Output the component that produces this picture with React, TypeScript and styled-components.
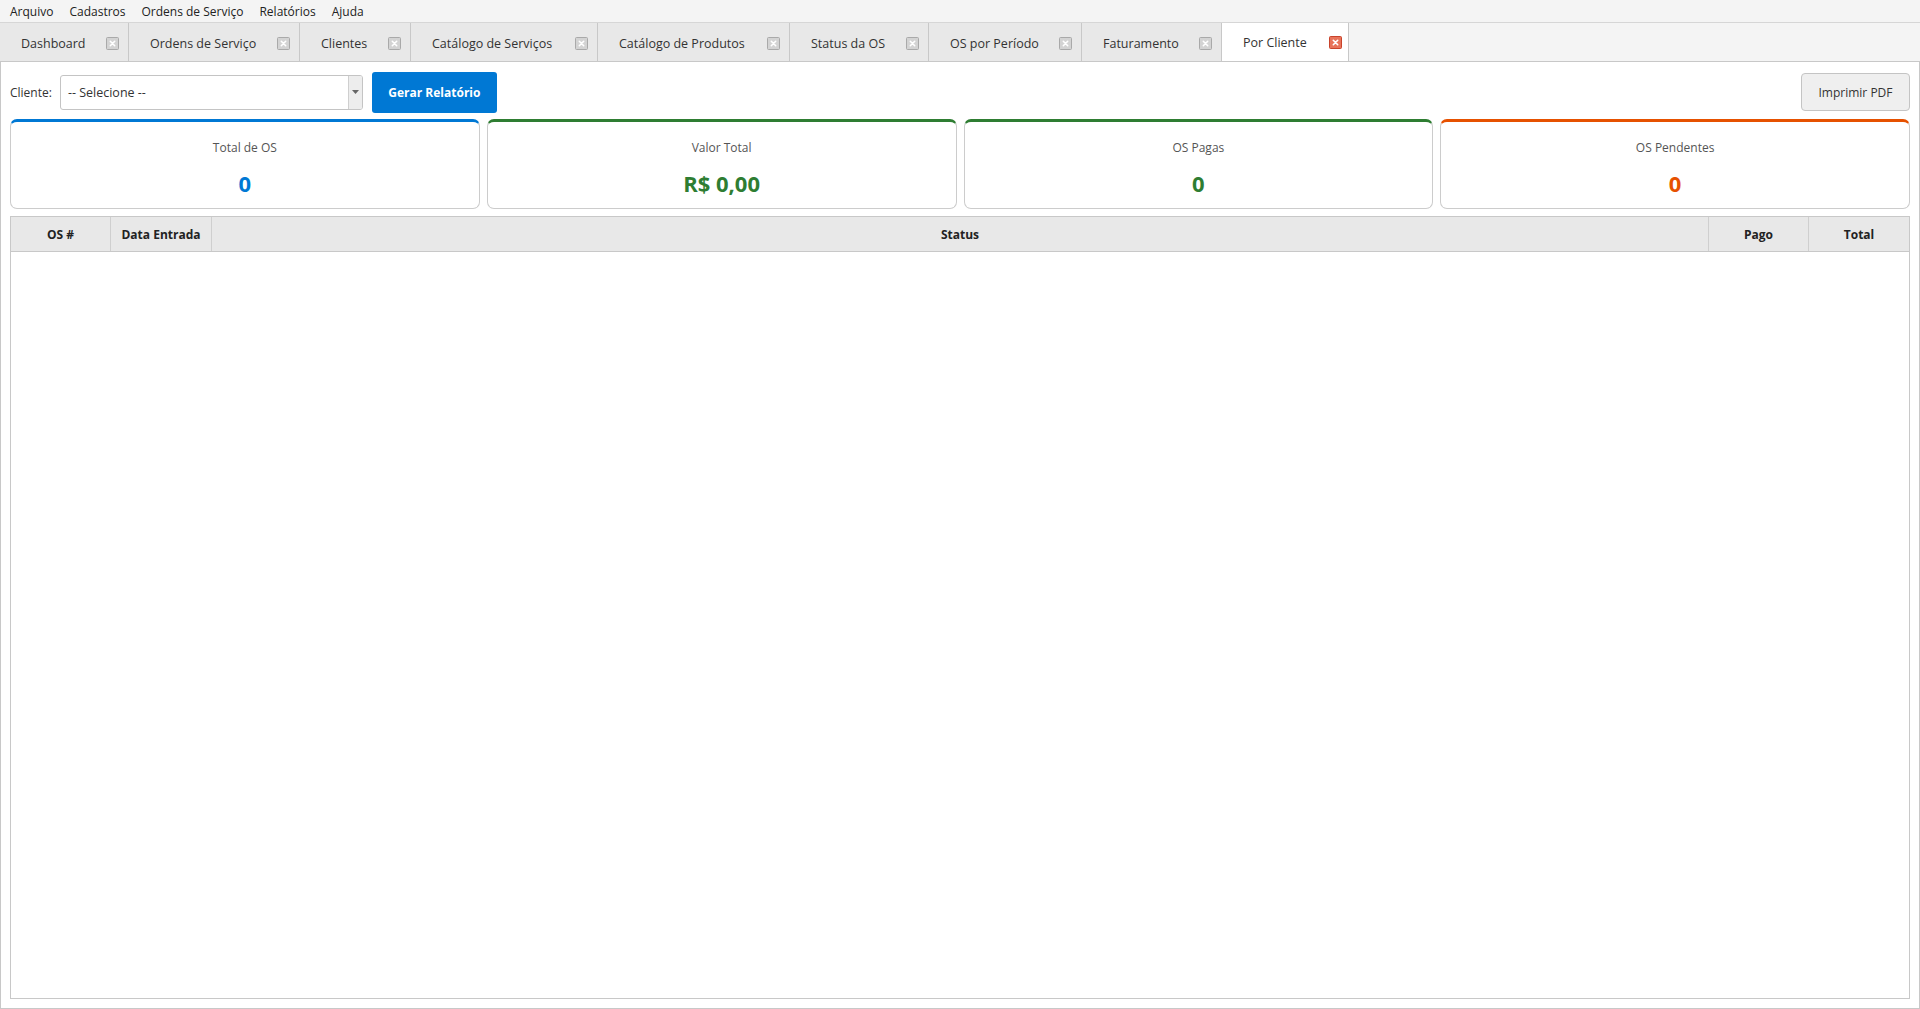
import React from 'react';
import styled, { createGlobalStyle } from 'styled-components';

const GlobalStyle = createGlobalStyle`
  html, body {
    margin: 0;
    padding: 0;
    height: 100%;
    background: #f4f4f4;
  }
  #root {
    height: 100%;
  }
  * {
    box-sizing: border-box;
  }
`;

type TabItem = { label: string; width: number; active?: boolean };

const tabs: TabItem[] = [
  { label: 'Dashboard', width: 129 },
  { label: 'Ordens de Serviço', width: 171 },
  { label: 'Clientes', width: 111 },
  { label: 'Catálogo de Serviços', width: 187 },
  { label: 'Catálogo de Produtos', width: 192 },
  { label: 'Status da OS', width: 139 },
  { label: 'OS por Período', width: 153 },
  { label: 'Faturamento', width: 140 },
  { label: 'Por Cliente', width: 127, active: true },
];

const menus = ['Arquivo', 'Cadastros', 'Ordens de Serviço', 'Relatórios', 'Ajuda'];

type Stat = { title: string; value: string; color: string };

const stats: Stat[] = [
  { title: 'Total de OS', value: '0', color: '#0078d4' },
  { title: 'Valor Total', value: 'R$ 0,00', color: '#2e7d32' },
  { title: 'OS Pagas', value: '0', color: '#2e7d32' },
  { title: 'OS Pendentes', value: '0', color: '#e65100' },
];

const columns = ['OS #', 'Data Entrada', 'Status', 'Pago', 'Total'];

const CloseIcon = ({ active }: { active?: boolean }) => (
  <svg width="13" height="13" viewBox="0 0 13 13">
    <rect
      x="0.5"
      y="0.5"
      width="12"
      height="12"
      rx="1"
      fill={active ? '#e8735a' : '#d3d3d3'}
      stroke={active ? '#c8432b' : '#a9a9a9'}
    />
    <path d="M4.3 4.3 L8.7 8.7 M8.7 4.3 L4.3 8.7" stroke="#fff" strokeWidth="1.6" strokeLinecap="round" />
  </svg>
);

export default function App() {
  return (
    <>
      <GlobalStyle />
      <Window>
        <MenuBar>
          {menus.map((m) => (
            <MenuItem key={m}>{m}</MenuItem>
          ))}
        </MenuBar>
        <TabBar>
          {tabs.map((t) => (
            <Tab key={t.label} $width={t.width} $active={t.active}>
              <TabLabel>{t.label}</TabLabel>
              <CloseIcon active={t.active} />
            </Tab>
          ))}
        </TabBar>
        <Content>
          <Toolbar>
            <Label>Cliente:</Label>
            <Combo>
              <ComboText>-- Selecione --</ComboText>
              <ComboArrow>
                <svg width="7" height="4" viewBox="0 0 7 4">
                  <path d="M0 0 L7 0 L3.5 4 Z" fill="#666" />
                </svg>
              </ComboArrow>
            </Combo>
            <PrimaryButton>Gerar Relatório</PrimaryButton>
            <Spacer />
            <SecondaryButton>Imprimir PDF</SecondaryButton>
          </Toolbar>
          <Cards>
            {stats.map((s) => (
              <Card key={s.title} $color={s.color}>
                <CardTitle>{s.title}</CardTitle>
                <CardValue $color={s.color}>{s.value}</CardValue>
              </Card>
            ))}
          </Cards>
          <Table>
            <HeaderRow>
              {columns.map((c) => (
                <HeaderCell key={c}>{c}</HeaderCell>
              ))}
            </HeaderRow>
            <TableBody />
          </Table>
        </Content>
      </Window>
    </>
  );
}

const Window = styled.div`
  height: 1009px;
  display: flex;
  flex-direction: column;
  font-family: 'Open Sans', 'Noto Sans', sans-serif;
  font-size: 12px;
  color: #333;
  background: #f4f4f4;
`;

const MenuBar = styled.div`
  height: 23px;
  display: flex;
  align-items: center;
  padding: 1px 0 0 2px;
  background: #f4f4f4;
  border-bottom: 1px solid #d6d6d6;
`;

const MenuItem = styled.div`
  padding: 0 8px;
  font-size: 12px;
  color: #222;
  line-height: 21px;
`;

const TabBar = styled.div`
  height: 39px;
  display: flex;
  background: #f4f4f4;
  border-bottom: 1px solid #c8c8c8;
`;

const Tab = styled.div<{ $width: number; $active?: boolean }>`
  width: ${(p) => p.$width}px;
  display: flex;
  align-items: center;
  justify-content: space-between;
  padding: ${(p) => (p.$active ? '0 6px 0 21px' : '2px 9px 0 21px')};
  background: ${(p) => (p.$active ? '#ffffff' : '#e8e8e8')};
  border-right: 1px solid #c8c8c8;
  color: #333;
  font-size: 12.5px;
`;

const TabLabel = styled.span`
  white-space: nowrap;
`;

const Content = styled.div`
  flex: 1;
  display: flex;
  flex-direction: column;
  gap: 7px;
  padding: 9px;
  background: #ffffff;
  border: 1px solid #c8c8c8;
  border-top: none;
  min-height: 0;
`;

const Toolbar = styled.div`
  display: flex;
  align-items: center;
  height: 41px;
  padding-top: 1px;
`;

const Label = styled.span`
  font-size: 12px;
  color: #333;
  margin-right: 8px;
`;

const Combo = styled.div`
  width: 303px;
  height: 35px;
  display: flex;
  align-items: center;
  justify-content: space-between;
  background: #fff;
  border: 1px solid #c4c4c4;
  border-radius: 3px;
  margin-right: 9px;
  overflow: hidden;
`;

const ComboText = styled.span`
  padding-left: 7px;
  font-size: 12.5px;
  color: #333;
`;

const ComboArrow = styled.div`
  width: 14px;
  height: 100%;
  display: flex;
  align-items: center;
  justify-content: center;
  background: #ededed;
  border-left: 1px solid #cfcfcf;
`;

const PrimaryButton = styled.button`
  width: 125px;
  height: 41px;
  border: 0;
  border-radius: 3px;
  background: #0078d4;
  color: #fff;
  font-family: inherit;
  font-size: 12px;
  font-weight: 700;
  cursor: pointer;
`;

const Spacer = styled.div`
  flex: 1;
`;

const SecondaryButton = styled.button`
  width: 109px;
  height: 38px;
  border: 1px solid #c4c4c4;
  border-radius: 4px;
  background: #efefef;
  color: #333;
  font-family: inherit;
  font-size: 12px;
  cursor: pointer;
`;

const Cards = styled.div`
  display: grid;
  grid-template-columns: repeat(4, 1fr);
  gap: 7px;
`;

const Card = styled.div<{ $color: string }>`
  height: 90px;
  display: flex;
  flex-direction: column;
  align-items: center;
  padding-top: 18px;
  gap: 14px;
  background: #fff;
  border: 1px solid #cccccc;
  border-top: 3px solid ${(p) => p.$color};
  border-radius: 7px;
`;

const CardTitle = styled.div`
  font-size: 12px;
  color: #555;
  line-height: 16px;
`;

const CardValue = styled.div<{ $color: string }>`
  font-size: 22px;
  font-weight: 700;
  line-height: 26px;
  color: ${(p) => p.$color};
`;

const Table = styled.div`
  flex: 1;
  display: flex;
  flex-direction: column;
  border: 1px solid #c8c8c8;
  background: #fff;
`;

const HeaderRow = styled.div`
  display: grid;
  grid-template-columns: 100px 101px 1fr 100px 100px;
  height: 35px;
  background: #e8e8e8;
  border-bottom: 1px solid #c8c8c8;
`;

const HeaderCell = styled.div`
  display: flex;
  align-items: center;
  justify-content: center;
  font-size: 12px;
  font-weight: 700;
  color: #222;
  border-right: 1px solid #cfcfcf;

  &:last-child {
    border-right: none;
  }
`;

const TableBody = styled.div`
  flex: 1;
`;
